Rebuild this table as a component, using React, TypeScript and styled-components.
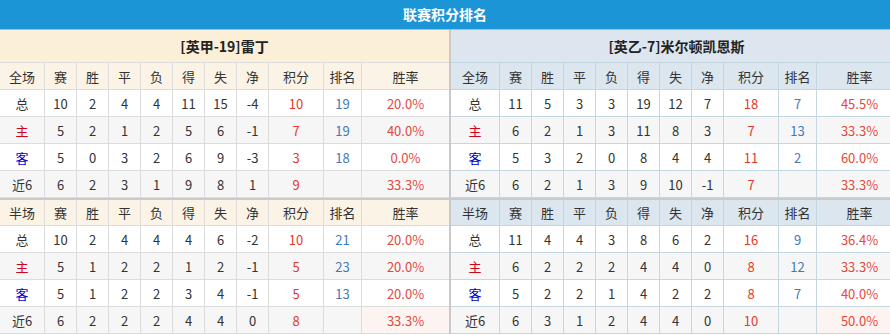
import React from 'react';
import styled, { createGlobalStyle, css } from 'styled-components';

type Row = [string, ...(string | number)[]];

interface TeamStats {
    name: string;
    tone: 'home' | 'away';
    full: Row[];
    half: Row[];
}

const teams: TeamStats[] = [
    {
        name: '[英甲-19]雷丁',
        tone: 'home',
        full: [
            ['总', 10, 2, 4, 4, 11, 15, -4, 10, 19, '20.0%'],
            ['主', 5, 2, 1, 2, 5, 6, -1, 7, 19, '40.0%'],
            ['客', 5, 0, 3, 2, 6, 9, -3, 3, 18, '0.0%'],
            ['近6', 6, 2, 3, 1, 9, 8, 1, 9, '', '33.3%'],
        ],
        half: [
            ['总', 10, 2, 4, 4, 4, 6, -2, 10, 21, '20.0%'],
            ['主', 5, 1, 2, 2, 1, 2, -1, 5, 23, '20.0%'],
            ['客', 5, 1, 2, 2, 3, 4, -1, 5, 13, '20.0%'],
            ['近6', 6, 2, 2, 2, 4, 4, 0, 8, '', '33.3%'],
        ],
    },
    {
        name: '[英乙-7]米尔顿凯恩斯',
        tone: 'away',
        full: [
            ['总', 11, 5, 3, 3, 19, 12, 7, 18, 7, '45.5%'],
            ['主', 6, 2, 1, 3, 11, 8, 3, 7, 13, '33.3%'],
            ['客', 5, 3, 2, 0, 8, 4, 4, 11, 2, '60.0%'],
            ['近6', 6, 2, 1, 3, 9, 10, -1, 7, '', '33.3%'],
        ],
        half: [
            ['总', 11, 4, 4, 3, 8, 6, 2, 16, 9, '36.4%'],
            ['主', 6, 2, 2, 2, 4, 4, 0, 8, 12, '33.3%'],
            ['客', 5, 2, 2, 1, 4, 2, 2, 8, 7, '40.0%'],
            ['近6', 6, 3, 1, 2, 4, 4, 0, 10, '', '50.0%'],
        ],
    },
];

const heads = ['赛', '胜', '平', '负', '得', '失', '净', '积分', '排名', '胜率'];

const palette = {
    home: { head: '#fcefd7', sub: '#fbf3e6', line: '#dcdcdc' },
    away: { head: '#dde6ee', sub: '#dce6ef', line: '#c4d7e1' },
};

const GlobalStyle = createGlobalStyle`
    html, body {
        margin: 0;
        padding: 0;
        background: #fff;
        overflow: hidden;
    }
    body {
        font-family: "Noto Sans CJK SC", "Noto Sans", sans-serif;
        font-size: 13px;
        color: #333;
    }
`;

const Page = styled.div`
    width: 890px;
    overflow: hidden;
`;

const TitleBar = styled.div`
    height: 29px;
    line-height: 29px;
    background: #1c95d7;
    border-bottom: 1px solid #8cc6ea;
    color: #fff;
    font-weight: bold;
    font-size: 14px;
    text-align: center;
`;

const Panels = styled.div`
    display: flex;
    width: 902px;
`;

const Panel = styled.div<{ tone: 'home' | 'away' }>`
    width: ${p => (p.tone === 'home' ? '449px' : '451px')};
    flex-shrink: 0;
    ${p =>
        p.tone === 'away' &&
        css`
            border-left: 2px solid #c9c9c9;
        `}
`;

const TeamHead = styled.div<{ tone: 'home' | 'away' }>`
    height: 32px;
    line-height: 32px;
    background: ${p => palette[p.tone].head};
    border-bottom: 1px solid ${p => palette[p.tone].line};
    text-align: center;
    font-weight: bold;
    font-size: 14px;
    color: #222;
`;

const Grid = styled.div<{ tone: 'home' | 'away'; kind: 'head' | 'even' | 'odd'; split?: boolean }>`
    display: grid;
    grid-template-columns: ${p =>
        p.tone === 'home'
            ? '45px repeat(7, 32px) 55px 38px 87px'
            : '49px repeat(7, 32px) 55px 38px 85px'};
    height: ${p => (p.split ? '25px' : '26px')};
    border-bottom: 1px solid ${p => palette[p.tone].line};
    background: ${p =>
        p.kind === 'head' ? palette[p.tone].sub : p.kind === 'odd' ? '#f6f6f6' : '#fff'};
    ${p =>
        p.split &&
        css`
            border-top: 2px solid #cacaca;
        `}
`;

type Tint = 'plain' | 'home' | 'away' | 'points' | 'rank' | 'rate';

const tintColor: Record<Tint, string> = {
    plain: '#333',
    home: '#d0021b',
    away: '#0000cc',
    points: '#e5392d',
    rank: '#3f7bb8',
    rate: '#e4483c',
};

const Cell = styled.div<{ tint: Tint; line: string; pink?: boolean }>`
    display: flex;
    align-items: center;
    justify-content: center;
    border-right: 1px solid ${p => p.line};
    color: ${p => tintColor[p.tint]};
    background: ${p => (p.pink ? '#fdf4f1' : 'transparent')};
    white-space: nowrap;

    &:last-child {
        border-right: none;
    }
`;

const labelTint = (label: string): Tint =>
    label === '主' ? 'home' : label === '客' ? 'away' : 'plain';

const valueTint = (i: number): Tint =>
    i === 7 ? 'points' : i === 8 ? 'rank' : i === 9 ? 'rate' : 'plain';

const Block: React.FC<{ team: TeamStats; title: string; rows: Row[]; split?: boolean }> = ({
    team,
    title,
    rows,
    split,
}) => {
    const line = palette[team.tone].line;
    return (
        <>
            <Grid tone={team.tone} kind="head" split={split}>
                <Cell tint="plain" line={line}>{title}</Cell>
                {heads.map(h => (
                    <Cell key={h} tint="plain" line={line}>
                        {h}
                    </Cell>
                ))}
            </Grid>
            {rows.map(([label, ...values], r) => (
                <Grid key={label} tone={team.tone} kind={r % 2 ? 'odd' : 'even'}>
                    <Cell tint={labelTint(label)} line={line}>{label}</Cell>
                    {values.map((v, i) => (
                        <Cell
                            key={i}
                            tint={valueTint(i)}
                            line={line}
                            pink={split && label === '近6' && i === 9}>
                            {v}
                        </Cell>
                    ))}
                </Grid>
            ))}
        </>
    );
};

const App: React.FC = () => {
    return (
        <Page>
            <GlobalStyle />
            <TitleBar>联赛积分排名</TitleBar>
            <Panels>
                {teams.map(team => (
                    <Panel key={team.name} tone={team.tone}>
                        <TeamHead tone={team.tone}>{team.name}</TeamHead>
                        <Block team={team} title="全场" rows={team.full} />
                        <Block team={team} title="半场" rows={team.half} split />
                    </Panel>
                ))}
            </Panels>
        </Page>
    );
};

export default App;
